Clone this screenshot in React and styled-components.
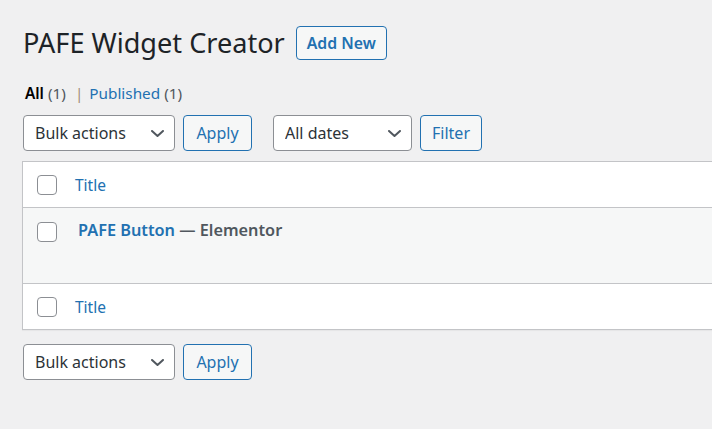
import React from 'react'
import styled, { createGlobalStyle } from 'styled-components'

const GlobalStyle = createGlobalStyle`
  html, body {
    margin: 0;
    padding: 0;
    background: #f0f0f1;
    overflow: hidden;
  }
  body {
    font-family: "Noto Sans", "Open Sans", sans-serif;
    color: #3c434a;
  }
`

const Chevron = () => (
  <svg width="13" height="7" viewBox="0 0 13 7" fill="none">
    <path d="M1 1l5.5 5 5.5-5" stroke="#50575e" strokeWidth="2" strokeLinecap="round" strokeLinejoin="round" />
  </svg>
)

const Dropdown = ({ label, width }) => (
  <SelectWrap width={width}>
    <Select defaultValue={label}>
      <option>{label}</option>
    </Select>
    <Arrow><Chevron /></Arrow>
  </SelectWrap>
)

const Tablenav = ({ withDates }) => (
  <Nav>
    <Actions>
      <Dropdown label="Bulk actions" width={152} />
      <Button width={69}>Apply</Button>
    </Actions>
    {withDates && (
      <Actions>
        <Dropdown label="All dates" width={139} />
        <Button width={62}>Filter</Button>
      </Actions>
    )}
  </Nav>
)

class App extends React.Component {
  render () {
    return (
      <React.Fragment>
        <GlobalStyle />
        <Wrap>
          <TitleRow>
            <Heading>PAFE Widget Creator</Heading>
            <AddNew>Add New</AddNew>
          </TitleRow>

          <Views>
            <Current>All</Current> <Count>(1)</Count>
            <Sep>|</Sep>
            <ViewLink>Published <Count>(1)</Count></ViewLink>
          </Views>

          <Tablenav withDates />

          <Table>
            <HeadRow>
              <Check type="checkbox" />
              <ColumnLink>Title</ColumnLink>
            </HeadRow>
            <PostRow>
              <Check type="checkbox" />
              <RowTitle>
                <a>PAFE Button</a> — Elementor
              </RowTitle>
            </PostRow>
            <HeadRow footer>
              <Check type="checkbox" />
              <ColumnLink>Title</ColumnLink>
            </HeadRow>
          </Table>

          <Tablenav />
        </Wrap>
      </React.Fragment>
    )
  }
}

const Wrap = styled.div`
  width: 760px;
  padding: 26px 0 0 22px;
`

const TitleRow = styled.div`
  display: flex;
  align-items: center;
  height: 34px;
`

const Heading = styled.h1`
  margin: 0 11px 0 1px;
  font-size: 27.1px;
  font-weight: 400;
  line-height: 34px;
  color: #1d2327;
`

const AddNew = styled.button`
  box-sizing: border-box;
  height: 34px;
  width: 91px;
  padding: 0;
  border: 1px solid #2271b1;
  border-radius: 4px;
  background: #f6f7f7;
  color: #2271b1;
  font-family: inherit;
  font-size: 15.8px;
  font-weight: 600;
`

const Views = styled.div`
  margin: 22px 0 0 3px;
  height: 22px;
  line-height: 22px;
  font-size: 15.3px;
  color: #50575e;
  white-space: nowrap;
`

const Current = styled.span`
  font-weight: 600;
  color: #000;
`

const Count = styled.span`
  color: #50575e;
`

const Sep = styled.span`
  margin: 0 6px 0 9px;
  color: #a08c78;
`

const ViewLink = styled.a`
  color: #2271b1;
`

const Nav = styled.div`
  display: flex;
  margin: 11px 0 0 1px;
  gap: 21px;
`

const Actions = styled.div`
  display: flex;
  gap: 8px;
`

const SelectWrap = styled.div`
  position: relative;
  width: ${p => p.width}px;
  height: 36px;
`

const Select = styled.select`
  appearance: none;
  box-sizing: border-box;
  width: 100%;
  height: 100%;
  margin: 0;
  padding: 0 30px 0 11px;
  border: 1px solid #8c8f94;
  border-radius: 4px;
  background: #fff;
  color: #2c3338;
  font-family: inherit;
  font-size: 16px;
  outline: none;
`

const Arrow = styled.span`
  position: absolute;
  right: 11px;
  top: 15px;
  display: flex;
  pointer-events: none;
`

const Button = styled.button`
  box-sizing: border-box;
  width: ${p => p.width}px;
  height: 36px;
  padding: 0;
  border: 1px solid #2271b1;
  border-radius: 4px;
  background: #f6f7f7;
  color: #2271b1;
  font-family: inherit;
  font-size: 16px;
`

const Table = styled.div`
  margin-top: 10px;
  border: 1px solid #c3c4c7;
  border-right: none;
  background: #fff;
  box-shadow: 0 1px 1px rgba(0, 0, 0, 0.04);
  margin-bottom: 14px;
`

const HeadRow = styled.div`
  display: flex;
  align-items: center;
  height: 45px;
  padding-left: 14px;
  ${p => p.footer ? 'border-top: 1px solid #c3c4c7;' : 'border-bottom: 1px solid #c3c4c7;'}
`

const PostRow = styled.div`
  display: flex;
  align-items: flex-start;
  height: 75px;
  padding-left: 14px;
  background: #f6f7f7;
`

const Check = styled.input`
  appearance: none;
  box-sizing: border-box;
  width: 20px;
  height: 20px;
  margin: 0;
  border: 1px solid #8c8f94;
  border-radius: 4px;
  background: #fff;
  flex: none;
  ${PostRow} & {
    margin-top: 14px;
  }
`

const ColumnLink = styled.a`
  margin-left: 18px;
  font-size: 15.5px;
  color: #2271b1;
`

const RowTitle = styled.strong`
  margin: 10px 0 0 21px;
  font-size: 16.3px;
  font-weight: 600;
  line-height: 24px;
  color: #50575e;
  a {
    color: #2271b1;
  }
`

export default App
